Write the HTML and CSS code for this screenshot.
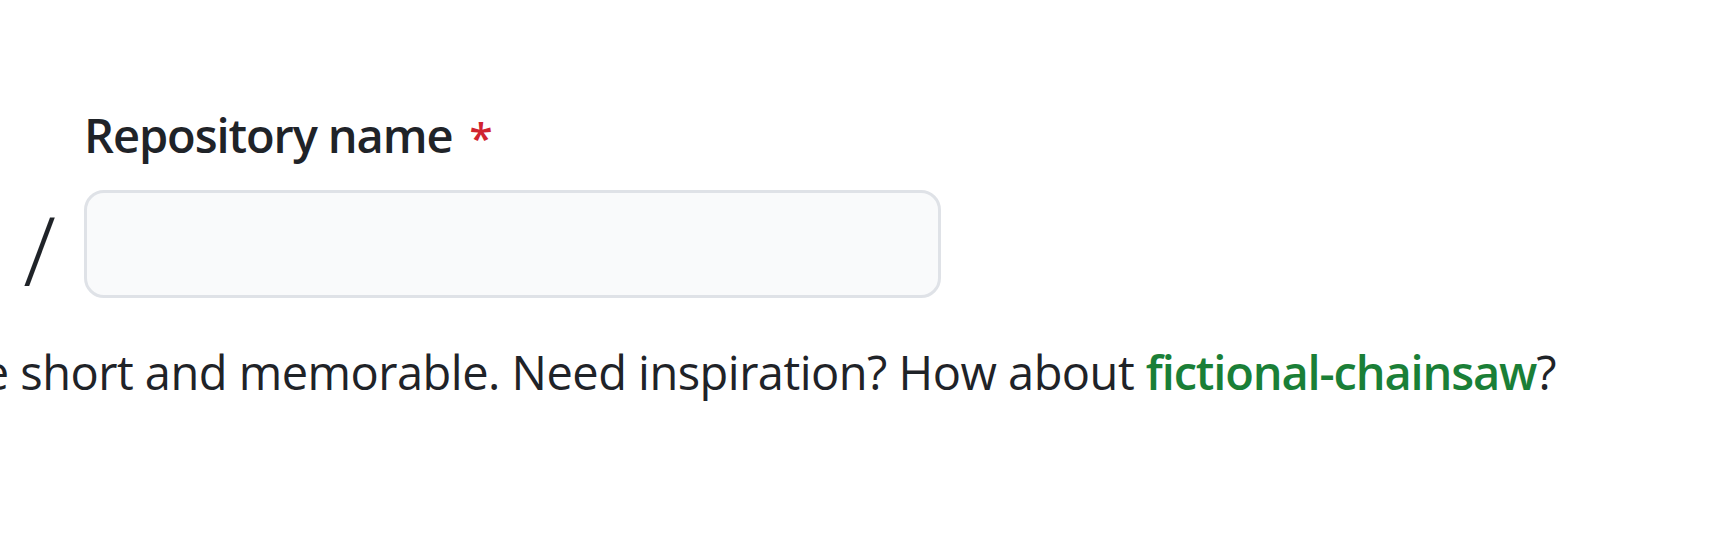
FILE: index.html
```html
<!DOCTYPE html>
<html lang="en">
<head>
<meta charset="utf-8">
<title>Repository name</title>
<link rel="stylesheet" href="styles.css">
</head>
<body>
<main class="page">
  <div class="row">
    <div class="slash-col"><span class="slash">/</span></div>
    <div class="field">
      <label class="label" for="repo">Repository name <span class="req">*</span></label>
      <input class="input" id="repo" type="text">
    </div>
  </div>
  <div class="note-wrap">
    <p class="note">Great repository names are short and memorable. Need inspiration? How about <strong class="suggest">fictional-chainsaw</strong>?</p>
  </div>
</main>
</body>
</html>
```

FILE: styles.css
```css
html, body {
  margin: 0;
  padding: 0;
  background: #ffffff;
  overflow: hidden;
}
body {
  font-family: "Open Sans", "Noto Sans", sans-serif;
  color: #1f2328;
}
.page {
  padding-top: 106px;
}
.row {
  display: flex;
  align-items: flex-end;
}
.slash-col {
  width: 84px;
  height: 108px;
  box-sizing: border-box;
  display: flex;
  align-items: center;
  justify-content: flex-end;
  padding-right: 28px;
  padding-top: 10px;
}
.slash {
  font-size: 96px;
  line-height: 1;
  font-weight: 300;
}
.field {
  display: flex;
  flex-direction: column;
  width: 857px;
}
.label {
  font-size: 47px;
  line-height: 58px;
  font-weight: 600;
  letter-spacing: -1.1px;
  margin-bottom: 26px;
}
.req {
  color: #d1242f;
  margin-left: 6px;
  font-size: 42px;
  line-height: 1;
  letter-spacing: 0;
}
.input {
  box-sizing: border-box;
  height: 108px;
  width: 100%;
  margin: 0;
  border: 3px solid #dfe2e7;
  border-radius: 20px;
  background: #f9fafb;
  outline: none;
}
.note-wrap {
  display: flex;
  justify-content: flex-end;
  width: 1556px;
  margin-top: 39px;
}
.note {
  margin: 0;
  white-space: nowrap;
  font-size: 47px;
  line-height: 70px;
  letter-spacing: -0.52px;
}
.suggest {
  color: #1a7f37;
  font-weight: 600;
  letter-spacing: -1.15px;
}
```
